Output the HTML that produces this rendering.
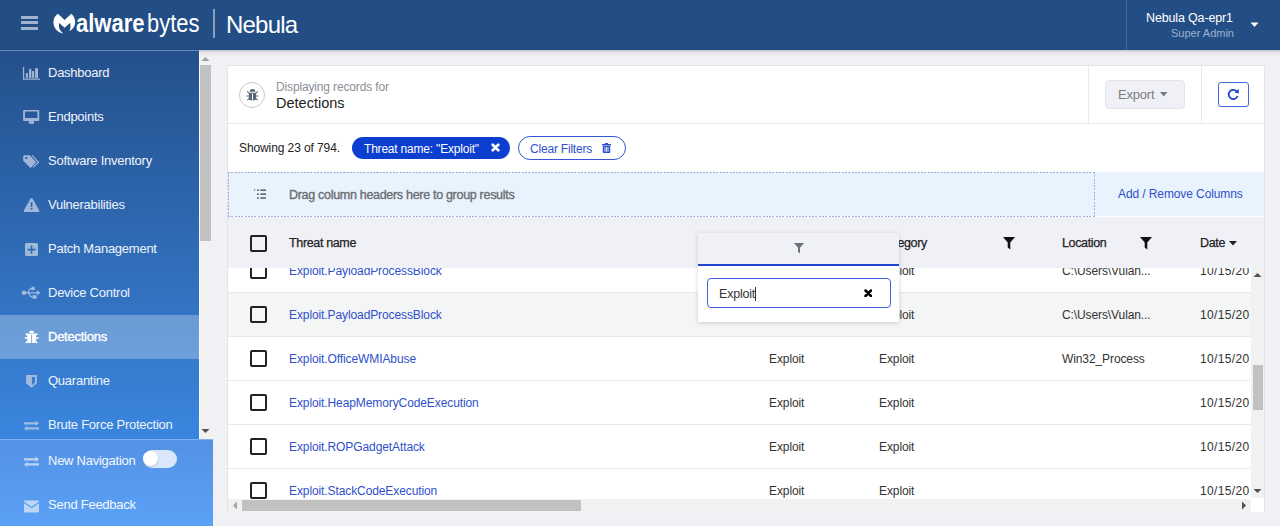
<!DOCTYPE html>
<html><head><meta charset="utf-8">
<style>
*{box-sizing:border-box;margin:0;padding:0}
html,body{width:1280px;height:526px;overflow:hidden;background:#f0f1f5;font-family:"Liberation Sans",sans-serif;position:relative}
.a{position:absolute}
.t{position:absolute;white-space:nowrap;line-height:1}
#hdr{left:0;top:0;width:1280px;height:50px;background:#234e85;border-bottom:1px solid #1d4780}
#side{left:0;top:51px;width:199px;height:388px;background:linear-gradient(#24508b,#3a86df);overflow:hidden}
.lb{position:absolute;left:48px;font-size:13px;color:#eef3fb;line-height:1;white-space:nowrap;letter-spacing:-0.25px}
#bot{left:0;top:439px;width:213px;height:87px;background:linear-gradient(#5392e6,#5aa1f6)}
</style></head><body>

<!-- HEADER -->
<div id="hdr" class="a">
  <div class="a" style="left:21px;top:16px;width:17px;height:3px;background:#9fb2cf"></div>
  <div class="a" style="left:21px;top:21px;width:17px;height:3px;background:#9fb2cf"></div>
  <div class="a" style="left:21px;top:27px;width:17px;height:3px;background:#9fb2cf"></div>
  <svg class="a" style="left:0;top:0" width="320" height="50" viewBox="0 0 320 50">
    <path fill="#fff" d="M58 13.7 L64.6 20 L71.4 13.7 C73.8 16 75.3 19 75.2 22.5 C75 26.5 72.6 29.6 69.4 31.1 C70.6 28.5 70.9 25.5 70 23.1 L64.6 27.7 L59.3 23.1 C58.2 27 59.5 31 63.4 33.4 C57.5 32.8 53.4 28 53.4 22.3 C53.4 18.5 55.2 15.6 58 13.7 Z"/>
    <text x="76" y="31.8" font-family="Liberation Sans" font-weight="700" font-size="25" fill="#fff" textLength="68.6" lengthAdjust="spacingAndGlyphs">alware</text>
    <text x="147" y="31.8" font-family="Liberation Sans" font-weight="400" font-size="25" fill="#fff" textLength="52.4" lengthAdjust="spacingAndGlyphs">bytes</text>
  </svg>
  <div class="a" style="left:213px;top:9px;width:2px;height:29px;background:#8ba0bd"></div>
  <div class="t" style="left:226px;top:13px;font-size:24px;color:#fff;letter-spacing:-0.8px">Nebula</div>
  <div class="a" style="left:1126px;top:0;width:1px;height:50px;background:#46699a"></div>
  <div class="t" style="left:1146px;top:12px;font-size:12.5px;color:#fff;letter-spacing:-0.15px">Nebula Qa-epr1</div>
  <div class="t" style="left:1171px;top:28px;font-size:11px;color:#9db0cd">Super Admin</div>
  <svg class="a" style="left:1250px;top:22px" width="9" height="6"><path d="M0.5 0.5H8.5L4.5 5Z" fill="#fff"/></svg>
</div>
<div class="a" style="left:0;top:50px;width:199px;height:1px;background:#6a8cbb"></div>

<!-- SIDEBAR -->
<div id="side" class="a">
  <div class="a" style="left:0;top:264px;width:199px;height:44px;background:rgba(255,255,255,.28)"></div>
  <span class="lb" style="top:15px">Dashboard</span>
  <span class="lb" style="top:59px">Endpoints</span>
  <span class="lb" style="top:103px">Software Inventory</span>
  <span class="lb" style="top:147px">Vulnerabilities</span>
  <span class="lb" style="top:191px">Patch Management</span>
  <span class="lb" style="top:235px">Device Control</span>
  <span class="lb" style="top:279px;color:#fff;-webkit-text-stroke:0.35px #fff">Detections</span>
  <span class="lb" style="top:323px">Quarantine</span>
  <span class="lb" style="top:367px">Brute Force Protection</span>
  <svg class="a" style="left:0;top:0" width="60" height="388" viewBox="0 51 60 388">
    <g fill="#b4c6e0" fill-opacity="0.85">
      <!-- dashboard chart -->
      <path d="M22.9 67h1.3v11.5H40v1.3H22.9Z"/>
      <rect x="25.9" y="73.1" width="2.1" height="4.8"/><rect x="29" y="68.9" width="2.3" height="9"/><rect x="31.9" y="71" width="2.3" height="6.9"/><rect x="35.1" y="68.1" width="2.9" height="9.8"/>
      <!-- monitor -->
      <path d="M24 110h14.4a0.9 0.9 0 0 1 0.9 0.9v9.2a0.9 0.9 0 0 1-0.9 0.9H24a0.9 0.9 0 0 1-0.9-0.9v-9.2a0.9 0.9 0 0 1 0.9-0.9Zm1 1.6v6.5h12.4v-6.5Z" fill-rule="evenodd"/>
      <path d="M28.8 121h5.2v2.8h-5.2Z"/>
      <!-- tags -->
      <path d="M24.2 155.2h5.6l6.3 7.1l-5.6 5.6l-7.3-7.2v-4.3a1.2 1.2 0 0 1 1-1.2Zm2.1 1.6a1.15 1.15 0 1 0 0.01 0Z" fill-rule="evenodd"/>
      <path d="M31.4 155.2h1.5l6.3 7.2l-5.8 5.4l-0.9-0.8l5-4.6Z"/>
      <!-- warning -->
      <path d="M30.6 198.6a1.1 1.1 0 0 1 1.9 0l6.8 11.8a1 1 0 0 1-0.9 1.5H24.7a1 1 0 0 1-0.9-1.5Zm0 3.6l0.2 4.9h1.5l0.2-4.9Zm0 5.7v1.7h1.9v-1.7Z" fill-rule="evenodd"/>
      <!-- plus square -->
      <path d="M26.5 243h10a1.5 1.5 0 0 1 1.5 1.5v10a1.5 1.5 0 0 1-1.5 1.5h-10a1.5 1.5 0 0 1-1.5-1.5v-10a1.5 1.5 0 0 1 1.5-1.5Zm4.2 2.5v3.3h-3.3v1.6h3.3v3.3h1.6v-3.3h3.3v-1.6h-3.3v-3.3Z" fill-rule="evenodd"/>
      <!-- usb -->
      <circle cx="23.9" cy="292.8" r="2.2"/>
      <path d="M25 292.2h11.8v-2l3.8 2.6l-3.8 2.6v-2H25Z"/>
      <path d="M26.8 292.4c0.9-0.3 1.4-1.4 1.8-2.4c0.5-1.2 1.3-1.9 2.8-1.9h0.8v1.2h-0.8c-0.9 0-1.3 0.5-1.7 1.3c-0.5 1.1-1 2.2-2.3 2.8Z"/>
      <circle cx="33.1" cy="288.4" r="1.9"/>
      <path d="M28.8 292.8c0.8 0.5 1.2 1.4 1.6 2.3c0.4 1 0.9 1.4 2.2 1.4v1.2c-1.9 0-2.7-0.8-3.3-2.1c-0.4-0.8-0.7-1.6-1.6-2Z"/>
      <rect x="32.5" y="295.2" width="4.2" height="3.5" rx="0.6"/>
      <!-- shield -->
      <path d="M26.1 375H36.9V383.2L31.5 387.8L26.1 383.2Z M31.9 376.9V385.3L35 382.6V376.9Z" fill-rule="evenodd"/>
      <!-- exchange -->
      <path d="M24 422.2H35.7V420.3L39 423.3L35.7 426.1V424.5H24Z"/>
      <path d="M39 427.2H27.3V425.8L24 428.5L27.3 431.1V429.6H39Z"/>
    </g>
    <!-- bug (detections, white) -->
    <g fill="#fff">
      <path d="M29 332.9a2.5 2.4 0 0 1 5 0Z"/>
      <path d="M27.2 333.4h8.8v8.2c0 0.9-0.7 1.5-1.5 1.5h-5.8c-0.9 0-1.5-0.6-1.5-1.5Z"/>
      <path d="M25.2 333.9l1-1l2 2l-1 1Z M37.9 333.9l-1-1l-2 2l1 1Z M24.7 337.3h3v1.4h-3Z M35.5 337.3h3v1.4h-3Z M25.4 342.4l2-2l1 1l-2 2Z M37.7 342.4l-2-2l-1 1l2 2Z"/>
    </g>
    <rect x="31.2" y="334.8" width="0.9" height="8.3" fill="#6b9dd9"/>
  </svg>
</div>
<div class="a" style="left:199px;top:51px;width:14px;height:388px;background:#f1f1f1;border-left:1px solid #fafafa"></div>
<div class="a" style="left:200px;top:65px;width:11px;height:176px;background:#c1c1c1"></div>
<svg class="a" style="left:200px;top:56px" width="11" height="6"><path d="M1.5 5h8L5.5 1Z" fill="#a3a3a3"/></svg>
<svg class="a" style="left:200px;top:428px" width="11" height="6"><path d="M1.5 1h8L5.5 5Z" fill="#505050"/></svg>

<div id="bot" class="a">
  <div class="a" style="left:0;top:0;width:213px;height:1px;background:rgba(255,255,255,.28)"></div>
  <svg class="a" style="left:0;top:0" width="60" height="87" viewBox="0 439 60 87">
    <g fill="#c9dcf6" fill-opacity="0.9">
      <path d="M24 458.2H35.7V456.3L39 459.3L35.7 462.1V460.5H24Z"/>
      <path d="M39 463.2H27.3V461.8L24 464.5L27.3 467.1V465.6H39Z"/>
      <path d="M24 500.5h15v1.2l-7.5 5l-7.5-5Z"/>
      <path d="M24 503.3l7.5 5l7.5-5v8.2a1 1 0 0 1-1 1h-13a1 1 0 0 1-1-1Z"/>
    </g>
  </svg>
  <span class="lb" style="top:15px;color:#f4f8fe">New Navigation</span>
  <div class="a" style="left:143px;top:11px;width:34px;height:18px;border-radius:9px;background:#d9e7fb"></div>
  <div class="a" style="left:143px;top:11.5px;width:15px;height:15px;border-radius:50%;background:#fff;box-shadow:0.5px 1px 1.5px rgba(0,0,0,.15)"></div>
  <span class="lb" style="top:59px;color:#f4f8fe">Send Feedback</span>
</div>

<!-- CONTENT -->

<div id="card" class="a" style="left:227px;top:65px;width:1038px;height:447px;background:#fff;border:1px solid #e4e5e8;border-bottom:none"></div>

<!-- card header -->
<div class="a" style="left:228px;top:123px;width:1036px;height:1px;background:#e6e7ea"></div>
<div class="a" style="left:1088px;top:66px;width:1px;height:57px;background:#ebebeb"></div>
<div class="a" style="left:1201px;top:66px;width:1px;height:57px;background:#ebebeb"></div>
<div class="a" style="left:239px;top:82px;width:26px;height:26px;border-radius:50%;border:1px solid #c9c9c9"></div>
<svg class="a" style="left:246px;top:89px" width="13" height="12" viewBox="0 0 13 12">
  <g fill="#586275">
    <path d="M3.7 2.8a2.8 2.8 0 0 1 5.6 0Z"/>
    <path d="M3 3.7h7v6c0 0.9-0.7 1.5-1.5 1.5h-4c-0.9 0-1.5-0.6-1.5-1.5Z"/>
    <path d="M0.8 2.6l0.9-0.6l1.6 2.1l-0.8 0.6Z M12.2 2.6l-0.9-0.6l-1.6 2.1l0.8 0.6Z M0.6 6.5h2.4v1.1H0.6Z M10 6.5h2.4v1.1H10Z M1 11l1.7-2.1l0.8 0.6l-1.7 2.1Z M12 11l-1.7-2.1l-0.8 0.6l1.7 2.1Z"/>
  </g>
  <rect x="6" y="4.5" width="1" height="6.2" fill="#fff"/>
</svg>
<div class="t" style="left:276px;top:81px;font-size:12px;color:#8a8f98;letter-spacing:-0.15px">Displaying records for</div>
<div class="t" style="left:276px;top:96px;font-size:14.5px;color:#222">Detections</div>
<div class="a" style="left:1105px;top:80px;width:80px;height:29px;border-radius:4px;background:#f0f1f6;border:1px solid #e2e4e9"></div>
<div class="t" style="left:1118px;top:88px;font-size:13px;color:#7a7c80;letter-spacing:-0.2px">Export</div>
<svg class="a" style="left:1160px;top:92px" width="8" height="5"><path d="M0 0H7.5L3.75 4.5Z" fill="#747982"/></svg>
<div class="a" style="left:1218px;top:82px;width:31px;height:25px;border-radius:3px;border:1px solid #4566de"></div>
<svg class="a" style="left:1226px;top:87px" width="14" height="14" viewBox="0 0 14 14">
  <path d="M11.3 5.2A4.6 4.6 0 1 0 11.6 9" fill="none" stroke="#1b3fcf" stroke-width="1.8"/>
  <path d="M8.6 5.4L12.7 1.9L12.8 6.6Z" fill="#1b3fcf"/>
</svg>

<!-- filter row -->
<div class="t" style="left:239px;top:142px;font-size:12px;color:#222;letter-spacing:-0.1px">Showing 23 of 794.</div>
<div class="a" style="left:352px;top:137px;width:158px;height:22px;border-radius:11px;background:#0c3ecf"></div>
<div class="t" style="left:364px;top:143px;font-size:12px;color:#fff;letter-spacing:-0.2px">Threat name: "Exploit"</div>
<svg class="a" style="left:490.5px;top:143px" width="9" height="9" viewBox="0 0 9 9"><path d="M1.7 1.7L7.3 7.3M7.3 1.7L1.7 7.3" stroke="#fff" stroke-width="2.7" stroke-linecap="round"/></svg>
<div class="a" style="left:518px;top:136px;width:108px;height:24px;border-radius:12px;border:1px solid #3455d4"></div>
<div class="t" style="left:530px;top:143px;font-size:12px;color:#2e50d0;letter-spacing:-0.2px">Clear Filters</div>
<svg class="a" style="left:602px;top:143px" width="9" height="10" viewBox="0 0 9 10">
  <g fill="#2e50d0"><rect x="0" y="1" width="9" height="1.4"/><rect x="3" y="0" width="3" height="1.3"/><path d="M0.8 2.8h7.4v6.4a0.8 0.8 0 0 1-0.8 0.8H1.6a0.8 0.8 0 0 1-0.8-0.8Z"/></g>
  <g fill="#fff"><rect x="2.6" y="3.9" width="0.8" height="4.9"/><rect x="4.1" y="3.9" width="0.8" height="4.9"/><rect x="5.6" y="3.9" width="0.8" height="4.9"/></g>
</svg>

<!-- drop zone -->
<div class="a" style="left:228px;top:172px;width:1036px;height:44px;background:#e9f3fd"></div>
<div class="a" style="left:228px;top:172px;width:867px;height:1px;background:repeating-linear-gradient(90deg,#a2afd8 0 2px,transparent 2px 3.3px)"></div>
<div class="a" style="left:228px;top:216px;width:867px;height:1px;background:repeating-linear-gradient(90deg,#a2afd8 0 2px,transparent 2px 3.3px)"></div>
<div class="a" style="left:228px;top:172px;width:1px;height:45px;background:repeating-linear-gradient(180deg,#a2afd8 0 2px,transparent 2px 3.3px)"></div>
<div class="a" style="left:1094px;top:172px;width:1px;height:45px;background:repeating-linear-gradient(180deg,#a2afd8 0 2px,transparent 2px 3.3px)"></div>
<svg class="a" style="left:253px;top:188px" width="14" height="12" viewBox="0 0 14 12">
  <g fill="#5f6670"><rect x="1" y="1.4" width="1.2" height="1.2"/><rect x="4" y="1.4" width="1.8" height="1.6"/><rect x="4" y="5.4" width="1.8" height="1.6"/><rect x="4" y="9.2" width="1.8" height="1.6"/><rect x="7.3" y="1.4" width="5.7" height="1.6"/><rect x="7.3" y="5.4" width="5.7" height="1.6"/><rect x="7.3" y="9.2" width="5.7" height="1.6"/></g>
</svg>
<div class="t" style="left:289px;top:189px;font-size:12.5px;color:#6a6d72;letter-spacing:-0.3px;-webkit-text-stroke:0.35px #6a6d72">Drag column headers here to group results</div>
<div class="t" style="left:1118px;top:188px;font-size:12px;color:#2f50c9;letter-spacing:-0.1px">Add / Remove Columns</div>

<!-- table header -->
<div class="a" style="left:228px;top:217px;width:1036px;height:51px;background:#f0f1f6"></div>
<div class="a" style="left:250px;top:235px;width:17px;height:17px;border:2px solid #222;border-radius:2px"></div>
<div class="t" style="left:289px;top:237px;font-size:12.5px;color:#222;letter-spacing:-0.35px;-webkit-text-stroke:0.25px #222">Threat name</div>
<div class="t" style="left:879px;top:237px;font-size:12.5px;color:#222;letter-spacing:-0.35px;-webkit-text-stroke:0.25px #222">Category</div>
<svg class="a" style="left:1003px;top:237px" width="12" height="13" viewBox="0 0 12 13"><path d="M0 0H12L7.3 5.6V12.5L4.7 10.5V5.6Z" fill="#111"/></svg>
<div class="t" style="left:1062px;top:237px;font-size:12.5px;color:#222;letter-spacing:-0.35px;-webkit-text-stroke:0.25px #222">Location</div>
<svg class="a" style="left:1140px;top:237px" width="12" height="13" viewBox="0 0 12 13"><path d="M0 0H12L7.3 5.6V12.5L4.7 10.5V5.6Z" fill="#111"/></svg>
<div class="t" style="left:1200px;top:237px;font-size:12.5px;color:#222;letter-spacing:-0.35px;-webkit-text-stroke:0.25px #222">Date</div>
<svg class="a" style="left:1229px;top:241px" width="9" height="5"><path d="M0 0H8L4 4.5Z" fill="#222"/></svg>

<!-- rows -->
<div class="a" style="left:228px;top:268px;width:1023px;height:231px;overflow:hidden">
  <div id="rows" class="a" style="left:0;top:-19px;width:1023px">
<div class="a" style="left:0;top:0px;width:1023px;height:44px;background:#fff;border-bottom:1px solid #e7e8ea"><div class="a" style="left:22px;top:13px;width:17px;height:17px;border:2px solid #222;border-radius:2px"></div><div class="t" style="left:61px;top:15.5px;font-size:12px;color:#2f50cc;letter-spacing:-0.1px">Exploit.PayloadProcessBlock</div><div class="t" style="left:541px;top:15.5px;font-size:12px;color:#333;letter-spacing:-0.1px">Exploit</div><div class="t" style="left:651px;top:15.5px;font-size:12px;color:#333;letter-spacing:-0.1px">Exploit</div><div class="t" style="left:834px;top:15.5px;font-size:12px;color:#333;letter-spacing:-0.1px">C:\Users\Vulan...</div><div class="t" style="left:972px;top:15.5px;font-size:12px;color:#333;letter-spacing:0.35px">10/15/20</div></div>
<div class="a" style="left:0;top:44px;width:1023px;height:44px;background:#f4f5f5;border-bottom:1px solid #e7e8ea"><div class="a" style="left:22px;top:13px;width:17px;height:17px;border:2px solid #222;border-radius:2px"></div><div class="t" style="left:61px;top:15.5px;font-size:12px;color:#2f50cc;letter-spacing:-0.1px">Exploit.PayloadProcessBlock</div><div class="t" style="left:541px;top:15.5px;font-size:12px;color:#333;letter-spacing:-0.1px">Exploit</div><div class="t" style="left:651px;top:15.5px;font-size:12px;color:#333;letter-spacing:-0.1px">Exploit</div><div class="t" style="left:834px;top:15.5px;font-size:12px;color:#333;letter-spacing:-0.1px">C:\Users\Vulan...</div><div class="t" style="left:972px;top:15.5px;font-size:12px;color:#333;letter-spacing:0.35px">10/15/20</div></div>
<div class="a" style="left:0;top:88px;width:1023px;height:44px;background:#fff;border-bottom:1px solid #e7e8ea"><div class="a" style="left:22px;top:13px;width:17px;height:17px;border:2px solid #222;border-radius:2px"></div><div class="t" style="left:61px;top:15.5px;font-size:12px;color:#2f50cc;letter-spacing:-0.1px">Exploit.OfficeWMIAbuse</div><div class="t" style="left:541px;top:15.5px;font-size:12px;color:#333;letter-spacing:-0.1px">Exploit</div><div class="t" style="left:651px;top:15.5px;font-size:12px;color:#333;letter-spacing:-0.1px">Exploit</div><div class="t" style="left:834px;top:15.5px;font-size:12px;color:#333;letter-spacing:-0.1px">Win32_Process</div><div class="t" style="left:972px;top:15.5px;font-size:12px;color:#333;letter-spacing:0.35px">10/15/20</div></div>
<div class="a" style="left:0;top:132px;width:1023px;height:44px;background:#fff;border-bottom:1px solid #e7e8ea"><div class="a" style="left:22px;top:13px;width:17px;height:17px;border:2px solid #222;border-radius:2px"></div><div class="t" style="left:61px;top:15.5px;font-size:12px;color:#2f50cc;letter-spacing:-0.1px">Exploit.HeapMemoryCodeExecution</div><div class="t" style="left:541px;top:15.5px;font-size:12px;color:#333;letter-spacing:-0.1px">Exploit</div><div class="t" style="left:651px;top:15.5px;font-size:12px;color:#333;letter-spacing:-0.1px">Exploit</div><div class="t" style="left:972px;top:15.5px;font-size:12px;color:#333;letter-spacing:0.35px">10/15/20</div></div>
<div class="a" style="left:0;top:176px;width:1023px;height:44px;background:#fff;border-bottom:1px solid #e7e8ea"><div class="a" style="left:22px;top:13px;width:17px;height:17px;border:2px solid #222;border-radius:2px"></div><div class="t" style="left:61px;top:15.5px;font-size:12px;color:#2f50cc;letter-spacing:-0.1px">Exploit.ROPGadgetAttack</div><div class="t" style="left:541px;top:15.5px;font-size:12px;color:#333;letter-spacing:-0.1px">Exploit</div><div class="t" style="left:651px;top:15.5px;font-size:12px;color:#333;letter-spacing:-0.1px">Exploit</div><div class="t" style="left:972px;top:15.5px;font-size:12px;color:#333;letter-spacing:0.35px">10/15/20</div></div>
<div class="a" style="left:0;top:220px;width:1023px;height:44px;background:#fff;border-bottom:1px solid #e7e8ea"><div class="a" style="left:22px;top:13px;width:17px;height:17px;border:2px solid #222;border-radius:2px"></div><div class="t" style="left:61px;top:15.5px;font-size:12px;color:#2f50cc;letter-spacing:-0.1px">Exploit.StackCodeExecution</div><div class="t" style="left:541px;top:15.5px;font-size:12px;color:#333;letter-spacing:-0.1px">Exploit</div><div class="t" style="left:651px;top:15.5px;font-size:12px;color:#333;letter-spacing:-0.1px">Exploit</div><div class="t" style="left:972px;top:15.5px;font-size:12px;color:#333;letter-spacing:0.35px">10/15/20</div></div>
  </div>
</div>

<!-- scrollbars -->
<div class="a" style="left:1251px;top:268px;width:13px;height:230px;background:#f1f1f1"></div>
<div class="a" style="left:1253px;top:365px;width:10px;height:45px;background:#c1c1c1"></div>
<svg class="a" style="left:1253px;top:272px" width="9" height="6"><path d="M0.5 5h8L4.5 1Z" fill="#505050"/></svg>
<svg class="a" style="left:1253px;top:488px" width="9" height="6"><path d="M0.5 1h8L4.5 5Z" fill="#505050"/></svg>
<div class="a" style="left:228px;top:499px;width:1023px;height:13px;background:#f1f1f1"></div>
<div class="a" style="left:242px;top:500px;width:339px;height:11px;background:#c1c1c1"></div>
<svg class="a" style="left:232px;top:501px" width="6" height="9"><path d="M5 0.5v8L1 4.5Z" fill="#a3a3a3"/></svg>
<svg class="a" style="left:1241px;top:501px" width="6" height="9"><path d="M1 0.5v8L5 4.5Z" fill="#505050"/></svg>
<div class="a" style="left:1251px;top:498px;width:13px;height:14px;background:#fff"></div>

<!-- filter popup -->
<div class="a" style="left:698px;top:233px;width:201px;height:89px;background:#fff;box-shadow:0 1px 5px rgba(0,0,0,.16)"></div>
<div class="a" style="left:698px;top:233px;width:201px;height:31px;background:#f0f1f6"></div>
<div class="a" style="left:698px;top:264px;width:201px;height:2px;background:#1f45d0"></div>
<svg class="a" style="left:794px;top:243px" width="10" height="11" viewBox="0 0 10 11"><path d="M0 0H10L6 4.8V10.5L4 8.8V4.8Z" fill="#6d737b"/></svg>
<div class="a" style="left:707px;top:278px;width:184px;height:30px;border:1px solid #3d5fe0;border-radius:4px"></div>
<div class="t" style="left:719px;top:288px;font-size:12.5px;color:#333;letter-spacing:-0.2px">Exploit</div>
<div class="a" style="left:755px;top:287px;width:1px;height:14px;background:#333"></div>
<svg class="a" style="left:863.5px;top:288.5px" width="8.5" height="8.5" viewBox="0 0 8.5 8.5"><path d="M1.5 1.5L7 7M7 1.5L1.5 7" stroke="#000" stroke-width="2.5" stroke-linecap="round"/></svg>

<div class="a" style="left:199px;top:50px;width:1081px;height:6px;background:linear-gradient(rgba(20,30,50,.20),rgba(20,30,50,.06) 40%,rgba(0,0,0,0))"></div>
</body></html>
